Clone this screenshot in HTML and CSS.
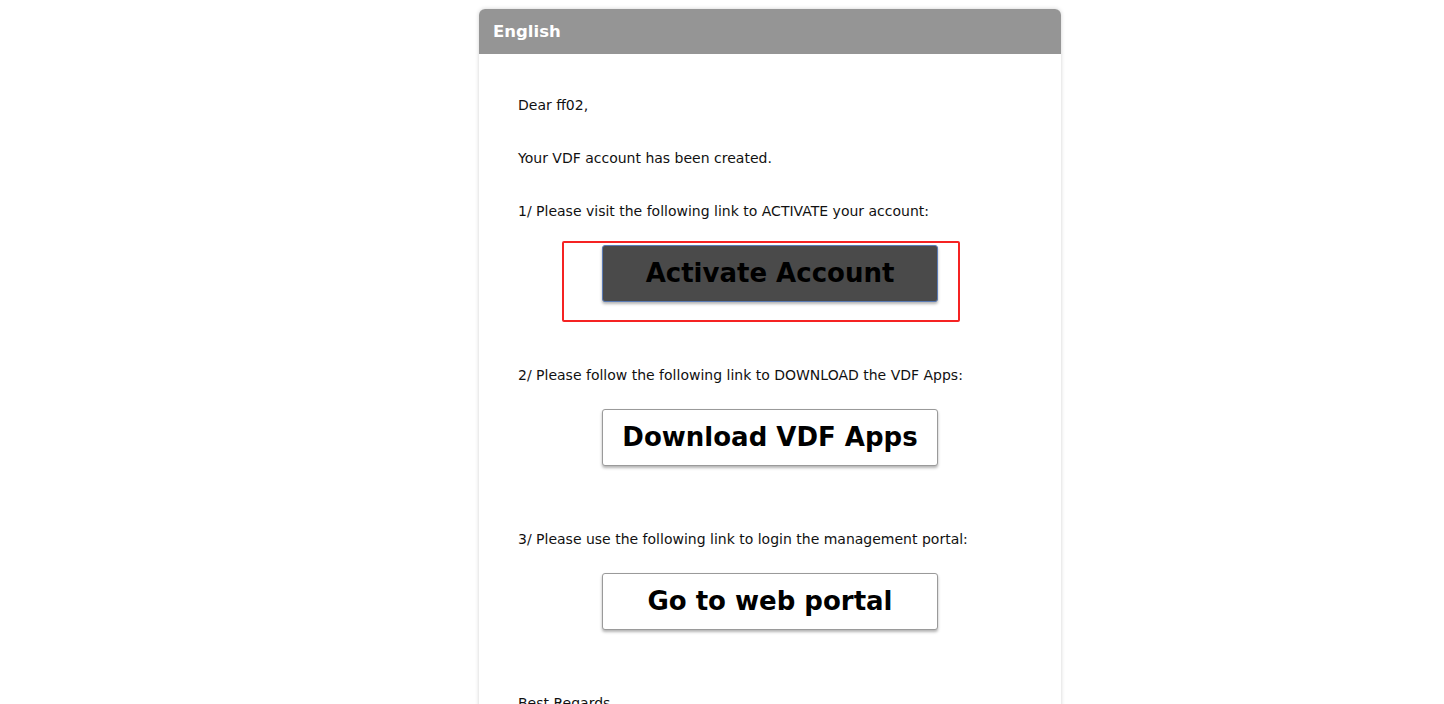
FILE: index.html
```html
<!DOCTYPE html>
<html lang="en">
<head>
    <meta charset="UTF-8">
    <title>VDF Account Created</title>
    <link rel="stylesheet" href="styles.css">
</head>
<body>

<div class="card">
    <div class="card-header">English</div>

    <div class="card-body">
        <p>Dear ff02,</p>
        <p>Your VDF account has been created.</p>

        <!-- Step 1 -->
        <p class="step">1/ Please visit the following link to ACTIVATE your account:</p>
        <div class="btn-row">
            <div class="highlight">
                <a href="#" class="btn btn-dark">Activate Account</a>
            </div>
        </div>

        <!-- Step 2 -->
        <p class="step">2/ Please follow the following link to DOWNLOAD the VDF Apps:</p>
        <div class="btn-row">
            <a href="#" class="btn">Download VDF Apps</a>
        </div>

        <!-- Step 3 -->
        <p class="step">3/ Please use the following link to login the management portal:</p>
        <div class="btn-row">
            <a href="#" class="btn">Go to web portal</a>
        </div>

        <p class="sign">Best Regards</p>
    </div>
</div>

</body>
</html>
```

FILE: styles.css
```css
* {
    margin: 0;
    padding: 0;
    box-sizing: border-box;
}
body {
    font-family: "DejaVu Sans", Verdana, sans-serif;
    background-color: #fff;
    color: #111;
    font-size: 14px;
    line-height: 18px;
}
.card {
    width: 582px;
    margin: 9px 0 0 479px;
    background-color: #fff;
    border-radius: 6px;
    box-shadow: 0 0 4px rgba(0, 0, 0, 0.18);
    overflow: hidden;
}
.card-header {
    height: 45px;
    background-color: #959595;
    color: #fff;
    font-weight: bold;
    font-size: 16.5px;
    line-height: 46px;
    padding-left: 14px;
}
.card-body {
    padding: 42px 39px 40px;
}
.card-body p {
    margin-bottom: 35px;
}
.card-body p.step {
    margin-bottom: 25px;
}
.btn-row {
    display: flex;
    justify-content: center;
    margin-bottom: 64px;
}
.highlight {
    position: relative;
}
.highlight::before {
    content: "";
    position: absolute;
    left: -40px;
    top: -4px;
    width: 398px;
    height: 81px;
    border: 2px solid #f52323;
    border-radius: 2px;
    box-sizing: border-box;
}
.btn {
    display: block;
    width: 336px;
    height: 57px;
    line-height: 55px;
    text-align: center;
    text-decoration: none;
    color: #000;
    font-weight: bold;
    font-size: 26px;
    background-color: #fff;
    border: 1px solid #9a9a9a;
    border-radius: 3px;
    box-shadow: 0 2px 3px rgba(0, 0, 0, 0.3);
}
.btn-dark {
    background-color: #4a4a4a;
    border-color: #5b7bb4;
}
```
